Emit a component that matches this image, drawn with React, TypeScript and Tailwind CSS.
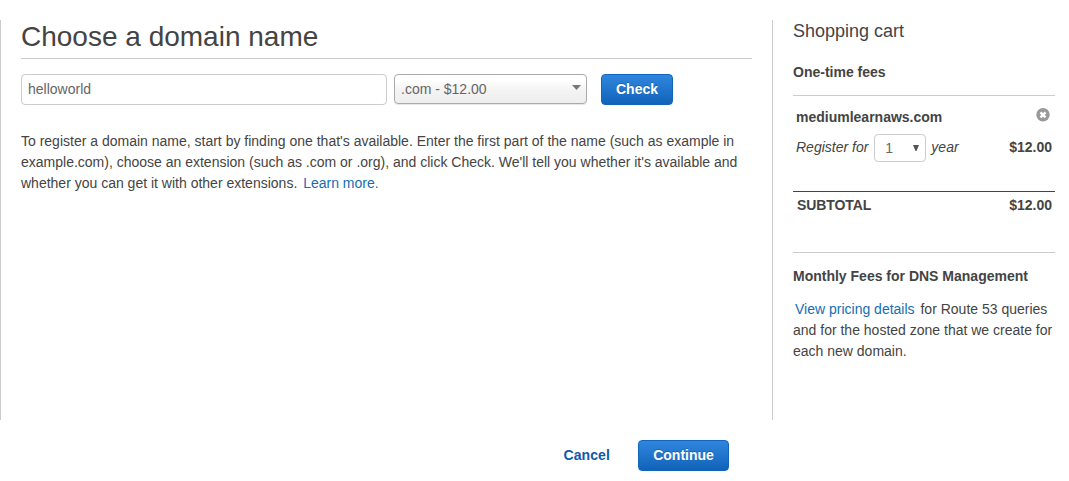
/**
 * Domain registration: name picker on the left, shopping cart on the right
 */
import { useState } from "react";

const EXTENSIONS = [
  { tld: ".com", price: 12 },
  { tld: ".org", price: 12 },
  { tld: ".net", price: 11 },
];

const cartItem = { domain: "mediumlearnaws.com", price: 12 };

const formatPrice = (value: number) => `$${value.toFixed(2)}`;

export default function App() {
  return (
    <div
      className="h-[481px] w-[1069px] overflow-hidden bg-white pt-5 text-sm text-[#444]"
      style={{ fontFamily: '"Liberation Sans", Arial, sans-serif' }}
    >
      <div className="flex h-[400px] border-l border-[#ccc]">
        <DomainPicker />
        <ShoppingCart />
      </div>
      <div className="mt-5 flex w-[729px] items-center justify-end">
        <button className="mr-7 pb-0.5 font-bold tracking-[0.1px] text-[#1059ad]">Cancel</button>
        <PrimaryButton label="Continue" className="w-[91px]" />
      </div>
    </div>
  );
}

function DomainPicker() {
  const [name, setName] = useState("helloworld");
  const [tld, setTld] = useState(".com");

  return (
    <main className="w-[771px] pr-5 pl-5">
      <h1 className="h-[39px] border-b border-[#ccc] text-[28px] leading-[33px]">
        Choose a domain name
      </h1>
      <div className="mt-[15px] flex items-start">
        <input
          value={name}
          onChange={(e) => setName(e.target.value)}
          className="h-[31px] w-[366px] rounded border border-[#ccc] px-1.5 pb-0.5 text-[#666] outline-none"
        />
        <div className="relative ml-[7px]">
          <select
            value={tld}
            onChange={(e) => setTld(e.target.value)}
            className="h-[30px] w-[193px] appearance-none rounded border border-[#aaa] bg-linear-to-b from-white from-20% via-[#f4f4f4] via-52% to-[#eee] px-1.5 text-[#666] shadow-[0_1px_1px_rgba(0,0,0,0.1)] outline-none"
          >
            {EXTENSIONS.map((ext) => (
              <option key={ext.tld} value={ext.tld}>
                {ext.tld} - {formatPrice(ext.price)}
              </option>
            ))}
          </select>
          <svg
            className="pointer-events-none absolute top-[11px] right-1.5"
            width="9"
            height="5"
            viewBox="0 0 9 5"
          >
            <path d="M0 0h9L4.5 5z" fill="#777" />
          </svg>
        </div>
        <PrimaryButton label="Check" className="ml-3.5 w-[72px]" />
      </div>
      <p className="mt-[26px] leading-[21px]">
        To register a domain name, start by finding one that's available. Enter the first part of the
        name (such as example in example.com), choose an extension (such as .com or .org), and click
        Check. We'll tell you whether it's available and whether you can get it with other
        extensions. <a className="ml-0.5 text-[#146eb4]">Learn more.</a>
      </p>
    </main>
  );
}

function ShoppingCart() {
  const [years, setYears] = useState("1");

  return (
    <aside className="w-[283px] border-l border-[#ccc] pl-5">
      <h2 className="text-lg leading-[22px]">Shopping cart</h2>
      <h3 className="mt-[19px] h-[35px] border-b border-[#ccc] leading-[22px] font-bold">
        One-time fees
      </h3>

      {/* Cart line */}
      <div className="flex h-[95px] flex-col pr-[3px] pl-[3px]">
        <div className="mt-[9px] flex h-6 items-start justify-between">
          <span className="leading-6 font-bold">{cartItem.domain}</span>
          <button className="mt-[3px] mr-0.5" aria-label="Remove">
            <svg width="14" height="14" viewBox="0 0 14 14">
              <circle cx="7" cy="6.75" r="6.75" fill="#999" />
              <path d="M4.5 4.3l5 5M9.5 4.3l-5 5" stroke="#fff" strokeWidth="2.4" />
            </svg>
          </button>
        </div>
        <div className="mt-[5px] flex h-7 items-center">
          <span className="pb-0.5 italic">Register for</span>
          <div className="relative mr-[5px] ml-1.5">
            <select
              value={years}
              onChange={(e) => setYears(e.target.value)}
              className="block h-7 w-[52px] appearance-none rounded border border-[#ccc] bg-white pl-2.5 text-[#666] outline-none"
            >
              <option>1</option>
              <option>2</option>
              <option>3</option>
            </select>
            <svg
              className="pointer-events-none absolute top-[11px] right-[7px]"
              width="6"
              height="6"
              viewBox="0 0 6 6"
            >
              <path d="M0 0h6L3.5 6h-1z" fill="#555" />
            </svg>
          </div>
          <span className="pb-0.5 italic">year</span>
          <span className="ml-auto pb-0.5 font-bold">{formatPrice(cartItem.price)}</span>
        </div>
      </div>

      <div className="flex h-[62px] justify-between border-t border-b border-t-[#444] border-b-[#ccc] pt-0.5 pr-[3px] pl-1 leading-[22px] font-bold">
        <span className="tracking-[-0.1px]">SUBTOTAL</span>
        <span>{formatPrice(cartItem.price * Number(years))}</span>
      </div>

      <h3 className="mt-3 leading-[22px] font-bold">Monthly Fees for DNS Management</h3>
      <p className="mt-3 leading-[21px]">
        <a className="mx-0.5 text-[#146eb4]">View pricing details</a> for Route 53 queries and for
        the hosted zone that we create for each new domain.
      </p>
    </aside>
  );
}

function PrimaryButton({ label, className }: { label: string; className: string }) {
  return (
    <button
      className={`h-[31px] rounded border border-[#1166bb] bg-linear-to-b from-[#2f86de] to-[#1163b9] pb-0.5 text-center font-bold text-white [text-shadow:0_-1px_0_rgba(0,0,0,0.2)] ${className}`}
    >
      {label}
    </button>
  );
}
